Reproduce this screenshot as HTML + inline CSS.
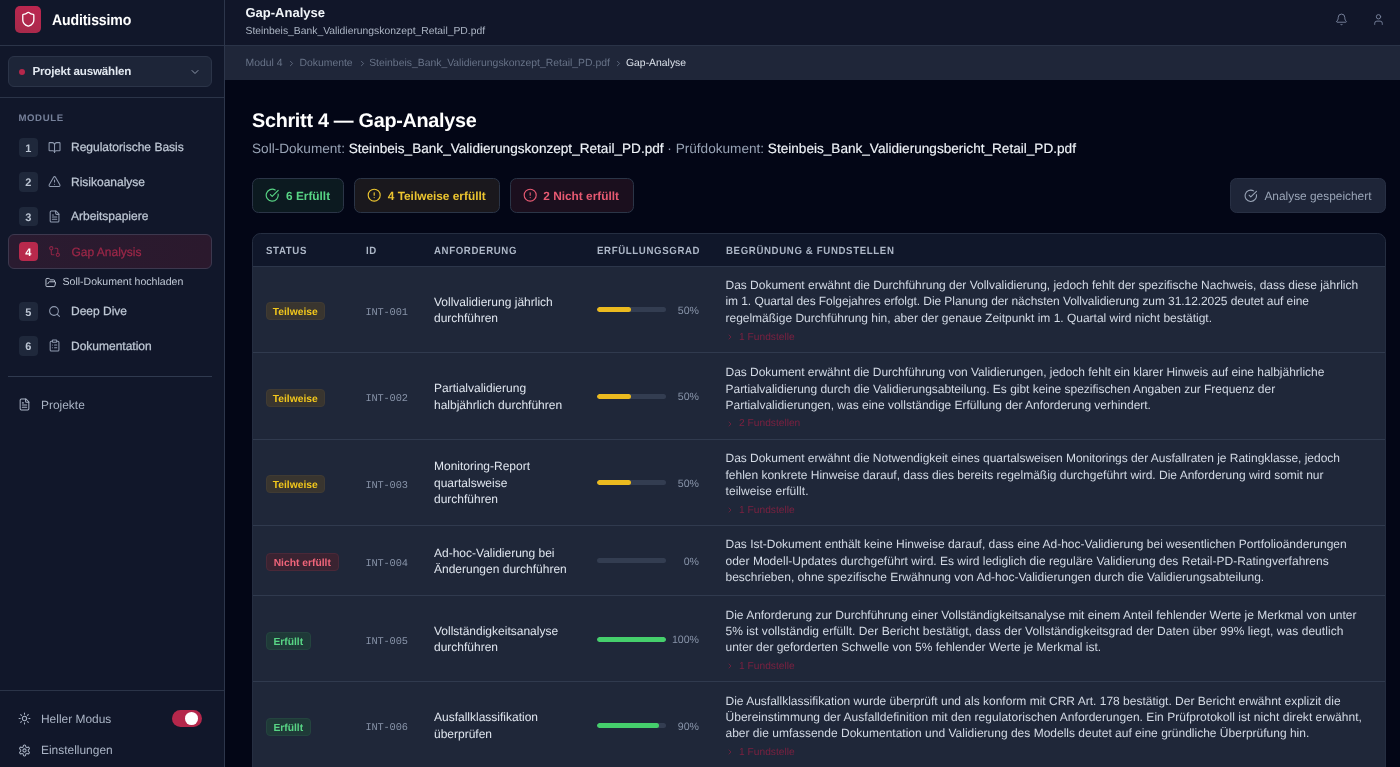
<!DOCTYPE html>
<html lang="de">
<head>
<meta charset="utf-8">
<title>Auditissimo – Gap-Analyse</title>
<style>
*{box-sizing:border-box;margin:0;padding:0}
html,body{width:1400px;height:767px;overflow:hidden;background:#030616;}
body{font-family:"Liberation Sans",sans-serif;color:#e2e8f0;position:relative;-webkit-font-smoothing:antialiased;text-rendering:geometricPrecision}
svg{display:block;fill:none;stroke:currentColor;stroke-width:2;stroke-linecap:round;stroke-linejoin:round}
#wrap{position:absolute;left:0;top:0;width:1400px;height:767px;overflow:hidden;will-change:transform}
.abs{position:absolute;white-space:nowrap}
/* ---------- sidebar ---------- */
#sidebar{position:absolute;left:0;top:0;width:225px;height:767px;background:#11172a;border-right:1px solid #2d364b}
#sb-head{position:absolute;left:0;top:0;width:224px;height:46px;border-bottom:1px solid #2b3448}
#logo{position:absolute;left:15px;top:6px;width:26px;height:27px;border-radius:5px;background:linear-gradient(200deg,#bd2650,#a62a4a);color:#fff}
#logo svg{position:absolute;left:4.7px;top:5.2px;width:16.6px;height:16.6px;stroke-width:1.9}
#brand{left:51.5px;top:11.9px;font-size:15.3px;font-weight:700;color:#fff;line-height:18px;letter-spacing:-0.13px;transform:scaleX(0.92);transform-origin:0 50%}
#proj{position:absolute;left:8px;top:56px;width:203.5px;height:31px;border-radius:6px;background:#1d2538;border:1px solid #2b3448}
#proj .dot{position:absolute;left:10.2px;top:11.5px;width:6px;height:6px;border-radius:50%;background:#b5274b}
#proj .t{left:23.5px;top:7px;font-size:11.6px;letter-spacing:-0.19px;font-weight:700;color:#e2e8f0;line-height:15px}
#proj svg{position:absolute;left:180px;top:9px;width:12px;height:12px;color:#8d98ab}
#sb-div1{position:absolute;left:0;top:97px;width:224px;height:1px;background:#2b3448}
#modlbl{left:18.4px;top:112.8px;font-size:9.6px;font-weight:700;letter-spacing:0.64px;color:#76819a;line-height:12px}
.nav{position:absolute;left:8px;width:203.5px;height:34.5px}
.nav .n{position:absolute;left:10.5px;top:7.5px;width:19.5px;height:19.5px;border-radius:4px;background:#1f283b;color:#bcc5d3;font-size:11px;font-weight:700;text-align:center;line-height:22.6px;overflow:hidden}
.nav svg{position:absolute;left:39.7px;top:10.6px;width:13.1px;height:13.1px;color:#909bb0;stroke-width:1.9}
.nav .l{left:63px;top:10.1px;font-size:12px;line-height:15px;color:#bec7d4;-webkit-text-stroke:0.25px currentColor}
.nav.act{background:linear-gradient(90deg,#2a1b30,#2b192d);border:1px solid #3d384e;border-radius:6px}
.nav.act .n{background:#b8294c;color:#fff;left:9.5px;top:6.5px}
.nav.act svg{color:#8f2446;left:38.5px;top:9.5px}
.nav.act .l{color:#9d2748;left:62.5px;top:9.6px}
#sub{position:absolute;left:44.5px;top:274px;height:16px}
#sub svg{position:absolute;left:0;top:2.5px;width:11.5px;height:11.5px;color:#c3ccd9;stroke-width:2}
#sub .l{left:18px;top:2.1px;font-size:10.55px;line-height:13px;color:#c0c9d6}
#sb-div2{position:absolute;left:8px;top:375.6px;width:204px;height:1px;background:#303a4f}
.misc svg{position:absolute;width:13px;height:13px;color:#a9b3c4;stroke-width:1.9}
.misc .l{font-size:11.95px;line-height:15px;color:#aab4c5}
#sb-foot{position:absolute;left:0;top:690px;width:224px;height:1px;background:#2b3448}
#toggle{position:absolute;left:172px;top:710px;width:30px;height:17px;border-radius:9px;background:#b5274b}
#toggle i{position:absolute;left:12.7px;top:2px;width:13.5px;height:13px;border-radius:50%;background:#fff}
/* ---------- topbar ---------- */
#topbar{position:absolute;left:225px;top:0;width:1175px;height:45px;background:#111629}
#tb-title{left:245.5px;top:4.6px;font-size:13px;font-weight:700;color:#f1f5f9;line-height:16px}
#tb-sub{left:245.5px;top:24.5px;font-size:10.35px;color:#acb5c4;line-height:13px}
.tbi{position:absolute;width:13px;height:13px;color:#76819a;stroke-width:1.8}
#crumbs{position:absolute;left:225px;top:45px;width:1175px;height:34.5px;background:#1f2639;border-top:1px solid #2a3347}
#crumbs span{position:absolute;top:11px;font-size:10.4px;line-height:13px;color:#677287;white-space:nowrap}
#crumbs span.cur{color:#dbe1ea}
#crumbs svg{position:absolute;top:13px;width:9px;height:9px;color:#667186;stroke-width:2.2}
/* ---------- content ---------- */
#h1{left:252px;top:109.3px;font-size:19.8px;font-weight:700;color:#fff;line-height:24px;letter-spacing:-0.28px}
#subline{left:252px;top:139.8px;font-size:13.6px;line-height:17px;color:#98a3b5}
#subline b{font-weight:400;color:#eef2f7;-webkit-text-stroke:0.15px currentColor}
.btn{position:absolute;top:178.3px;height:34.4px;border-radius:6.5px;border:1px solid #2b3547}
.btn svg{position:absolute;top:8.8px;width:14.4px;height:14.4px;stroke-width:1.9}
.btn .l{position:absolute;top:9.5px;font-size:11.85px;font-weight:700;line-height:14px;white-space:nowrap}
/* ---------- table ---------- */
#tbl{position:absolute;left:252px;top:232.5px;width:1133.5px;height:560px;border:1px solid #252e41;border-radius:8.5px 8.5px 0 0;background:#1f2739;overflow:hidden}
#thead{position:absolute;left:0;top:0;width:100%;height:33.6px;background:#10172a;border-bottom:1px solid #2c364a;z-index:2}
#thead span{position:absolute;top:11.9px;font-size:10.5px;font-weight:700;letter-spacing:0.68px;line-height:12px;color:#adb7c7;white-space:nowrap;transform:scaleX(0.92);transform-origin:0 50%}
.row{position:absolute;left:0;width:100%;border-bottom:1px solid #303a4e}
.bdg{position:absolute;left:13px;height:18px;border-radius:4px;font-size:10.3px;font-weight:700;line-height:17px;text-align:center;white-space:nowrap}
.bdg.y{background:#39352f;color:#f2c71c;border:1px solid #403b33}
.bdg.r{background:#3a2331;color:#f0657a;border:1px solid #4a2838}
.bdg.g{background:#1f3a38;color:#58d585;border:1px solid #24443f}
.id{position:absolute;left:112.5px;font-family:"Liberation Mono",monospace;font-size:10.3px;line-height:13px;color:#8793a8;letter-spacing:-0.15px}
.req{position:absolute;left:181px;font-size:12px;line-height:16.4px;color:#dfe5ee;white-space:nowrap}
.bar{position:absolute;left:343.5px;width:69.5px;height:5px;border-radius:3px;background:#333d51;overflow:hidden}
.bar i{display:block;height:5px;border-radius:3px}
.bar i.y{background:#ebba1f}
.bar i.g{background:#45cf6c}
.pct{position:absolute;left:400px;width:46px;text-align:right;font-size:10.6px;line-height:13px;color:#8793a8}
.txt{position:absolute;left:472.5px;font-size:12px;line-height:16.3px;color:#d2d9e4;white-space:nowrap}
.fs{position:absolute;left:472.5px;height:13px;color:#7a2140;font-size:10.2px;line-height:13px;white-space:nowrap;padding-left:13.6px}
.fs svg{position:absolute;left:0.5px;top:2.5px;width:8px;height:8px;stroke-width:2.4}
</style>
</head>
<body>
<div id="wrap">
<aside id="sidebar">
  <div id="sb-head">
    <div id="logo"><svg viewBox="0 0 24 24"><path d="M20 13c0 5-3.500 7.500-7.660 8.950a1 1 0 0 1-.670-.010C7.500 20.500 4 18 4 13V6a1 1 0 0 1 1-1c2 0 4.500-1.200 6.240-2.720a1.170 1.170 0 0 1 1.520 0C14.510 3.810 17 5 19 5a1 1 0 0 1 1 1z"/></svg></div>
    <div id="brand" class="abs">Auditissimo</div>
  </div>
  <div id="proj">
    <span class="dot"></span>
    <span class="t abs">Projekt auswählen</span>
    <svg viewBox="0 0 24 24"><path d="m6 9 6 6 6-6"/></svg>
  </div>
  <div id="sb-div1"></div>
  <div id="modlbl" class="abs">MODULE</div>

  <nav>
  <div class="nav" style="top:130px"><span class="n">1</span>
    <svg viewBox="0 0 24 24"><path d="M12 7v14"/><path d="M3 18a1 1 0 0 1-1-1V4a1 1 0 0 1 1-1h5a4 4 0 0 1 4 4 4 4 0 0 1 4-4h5a1 1 0 0 1 1 1v13a1 1 0 0 1-1 1h-6a3 3 0 0 0-3 3 3 3 0 0 0-3-3z"/></svg>
    <span class="l abs">Regulatorische Basis</span></div>
  <div class="nav" style="top:164.5px"><span class="n">2</span>
    <svg viewBox="0 0 24 24"><path d="m21.730 18-8-14a2 2 0 0 0-3.480 0l-8 14A2 2 0 0 0 4 21h16a2 2 0 0 0 1.730-3"/><path d="M12 9v4"/><path d="M12 17h.01"/></svg>
    <span class="l abs">Risikoanalyse</span></div>
  <div class="nav" style="top:199px"><span class="n">3</span>
    <svg viewBox="0 0 24 24"><path d="M15 2H6a2 2 0 0 0-2 2v16a2 2 0 0 0 2 2h12a2 2 0 0 0 2-2V7Z"/><path d="M14 2v4a2 2 0 0 0 2 2h4"/><path d="M10 9H8"/><path d="M16 13H8"/><path d="M16 17H8"/></svg>
    <span class="l abs">Arbeitspapiere</span></div>
  <div class="nav act" style="top:234px"><span class="n">4</span>
    <svg viewBox="0 0 24 24"><circle cx="18" cy="18" r="3"/><circle cx="6" cy="6" r="3"/><path d="M13 6h3a2 2 0 0 1 2 2v7"/><path d="M11 18H8a2 2 0 0 1-2-2V9"/></svg>
    <span class="l abs">Gap Analysis</span></div>
  <div id="sub">
    <svg viewBox="0 0 24 24"><path d="m6 14 1.500-2.900A2 2 0 0 1 9.240 10H20a2 2 0 0 1 1.940 2.500l-1.540 6a2 2 0 0 1-1.950 1.500H4a2 2 0 0 1-2-2V5a2 2 0 0 1 2-2h3.900a2 2 0 0 1 1.690.900l.810 1.200a2 2 0 0 0 1.670.900H18a2 2 0 0 1 2 2v2"/></svg>
    <span class="l abs">Soll-Dokument hochladen</span></div>
  <div class="nav" style="top:294px"><span class="n">5</span>
    <svg viewBox="0 0 24 24"><circle cx="11" cy="11" r="8"/><path d="m21 21-4.300-4.300"/></svg>
    <span class="l abs">Deep Dive</span></div>
  <div class="nav" style="top:328.5px"><span class="n">6</span>
    <svg viewBox="0 0 24 24"><rect x="8" y="2" width="8" height="4" rx="1"/><path d="M16 4h2a2 2 0 0 1 2 2v14a2 2 0 0 1-2 2H6a2 2 0 0 1-2-2V6a2 2 0 0 1 2-2h2"/><path d="M12 11h4"/><path d="M12 16h4"/><path d="M8 11h.01"/><path d="M8 16h.01"/></svg>
    <span class="l abs">Dokumentation</span></div>
  </nav>
  <div id="sb-div2"></div>

  <div class="misc">
    <svg viewBox="0 0 24 24" style="left:18px;top:398px"><path d="M15 2H6a2 2 0 0 0-2 2v16a2 2 0 0 0 2 2h12a2 2 0 0 0 2-2V7Z"/><path d="M14 2v4a2 2 0 0 0 2 2h4"/><path d="M10 9H8"/><path d="M16 13H8"/><path d="M16 17H8"/></svg>
    <span class="l abs" style="left:41px;top:397.8px">Projekte</span>
  </div>
  <div id="sb-foot"></div>
  <div class="misc">
    <svg viewBox="0 0 24 24" style="left:18px;top:712px"><circle cx="12" cy="12" r="4"/><path d="M12 2v2"/><path d="M12 20v2"/><path d="m4.930 4.930 1.410 1.410"/><path d="m17.660 17.660 1.410 1.410"/><path d="M2 12h2"/><path d="M20 12h2"/><path d="m6.340 17.660-1.410 1.410"/><path d="m19.070 4.930-1.410 1.410"/></svg>
    <span class="l abs" style="left:41px;top:711.7px">Heller Modus</span>
    <div id="toggle"><i></i></div>
    <svg viewBox="0 0 24 24" style="left:18px;top:743.5px"><path d="M12.220 2h-.440a2 2 0 0 0-2 2v.180a2 2 0 0 1-1 1.730l-.430.250a2 2 0 0 1-2 0l-.150-.080a2 2 0 0 0-2.730.730l-.220.380a2 2 0 0 0 .730 2.730l.150.100a2 2 0 0 1 1 1.720v.510a2 2 0 0 1-1 1.740l-.150.090a2 2 0 0 0-.730 2.730l.220.380a2 2 0 0 0 2.730.730l.150-.080a2 2 0 0 1 2 0l.430.250a2 2 0 0 1 1 1.730V20a2 2 0 0 0 2 2h.440a2 2 0 0 0 2-2v-.180a2 2 0 0 1 1-1.730l.430-.250a2 2 0 0 1 2 0l.150.080a2 2 0 0 0 2.730-.730l.220-.390a2 2 0 0 0-.730-2.730l-.150-.080a2 2 0 0 1-1-1.740v-.500a2 2 0 0 1 1-1.740l.150-.090a2 2 0 0 0 .730-2.730l-.220-.380a2 2 0 0 0-2.730-.730l-.150.080a2 2 0 0 1-2 0l-.430-.250a2 2 0 0 1-1-1.730V4a2 2 0 0 0-2-2z"/><circle cx="12" cy="12" r="3"/></svg>
    <span class="l abs" style="left:41px;top:742.5px">Einstellungen</span>
  </div>
</aside>
<header id="topbar"></header>
<div id="tb-title" class="abs">Gap-Analyse</div>
<div id="tb-sub" class="abs">Steinbeis_Bank_Validierungskonzept_Retail_PD.pdf</div>
<svg class="tbi" viewBox="0 0 24 24" style="left:1335px;top:12.5px"><path d="M10.268 21a2 2 0 0 0 3.464 0"/><path d="M3.262 15.326A1 1 0 0 0 4 17h16a1 1 0 0 0 .740-1.673C19.410 13.956 18 12.499 18 8A6 6 0 0 0 6 8c0 4.499-1.411 5.956-2.738 7.326"/></svg>
<svg class="tbi" viewBox="0 0 24 24" style="left:1371.5px;top:13px"><path d="M19 21v-2a4 4 0 0 0-4-4H9a4 4 0 0 0-4 4v2"/><circle cx="12" cy="7" r="4"/></svg>
<div id="crumbs">
  <span id="c1" style="left:20.5px">Modul 4</span><svg viewBox="0 0 24 24" style="left:62px"><path d="m9 18 6-6-6-6"/></svg>
  <span id="c2" style="left:74.5px">Dokumente</span><svg viewBox="0 0 24 24" style="left:132.5px"><path d="m9 18 6-6-6-6"/></svg>
  <span id="c3" style="left:144.2px">Steinbeis_Bank_Validierungskonzept_Retail_PD.pdf</span><svg viewBox="0 0 24 24" style="left:389px"><path d="m9 18 6-6-6-6"/></svg>
  <span id="c4" class="cur" style="left:401px">Gap-Analyse</span>
</div>
<main id="main">
<h1 id="h1" class="abs">Schritt 4 — Gap-Analyse</h1>
<p id="subline" class="abs"><span id="s1">Soll-Dokument: </span><b id="s2">Steinbeis_Bank_Validierungskonzept_Retail_PD.pdf</b><span id="s3"> · Prüfdokument: </span><b id="s4">Steinbeis_Bank_Validierungsbericht_Retail_PD.pdf</b></p>

<div class="btn" style="left:252px;width:92px;background:#0c1a20;color:#58d585">
  <svg viewBox="0 0 24 24" style="left:11.9px"><path d="M21.801 10A10 10 0 1 1 17 3.335"/><path d="m9 11 3 3L22 4"/></svg>
  <span class="l" id="b1" style="left:33px">6 Erfüllt</span></div>
<div class="btn" style="left:354px;width:145.5px;background:#1a181d;color:#ecc530">
  <svg viewBox="0 0 24 24" style="left:11.7px"><circle cx="12" cy="12" r="10"/><path d="M12 8v4"/><path d="M12 16h.01"/></svg>
  <span class="l" id="b2" style="left:32.8px">4 Teilweise erfüllt</span></div>
<div class="btn" style="left:509.5px;width:124px;background:#1b0f1e;color:#e75a72">
  <svg viewBox="0 0 24 24" style="left:12.5px"><circle cx="12" cy="12" r="10"/><path d="M12 8v4"/><path d="M12 16h.01"/></svg>
  <span class="l" id="b3" style="left:32.8px">2 Nicht erfüllt</span></div>
<div class="btn" style="left:1230px;width:155.5px;background:#1e2538;border-color:#283044;color:#9aa5b7">
  <svg viewBox="0 0 24 24" style="left:13px;width:13.6px;height:13.6px;top:9.3px"><path d="M21.801 10A10 10 0 1 1 17 3.335"/><path d="m9 11 3 3L22 4"/></svg>
  <span class="l" id="b4" style="left:33.4px;font-weight:400;font-size:11.9px">Analyse gespeichert</span></div>

<section id="tbl">
<div id="thead"><span style="left:13px">STATUS</span><span style="left:112.5px">ID</span><span style="left:181px">ANFORDERUNG</span><span style="left:343.5px">ERFÜLLUNGSGRAD</span><span style="left:472.5px">BEGRÜNDUNG &amp; FUNDSTELLEN</span></div>
<div class="row" id="r1" style="top:32.80px;height:86.95px">
<span class="bdg y" id="r1bdg" style="top:35.82px;width:58.5px"><span id="r1bt" style="position:relative;top:1.23px">Teilweise</span></span>
<span class="id" id="r1id" style="top:40.71px">INT-001</span>
<div class="req" id="r1req" style="top:27.27px">Vollvalidierung jährlich<br>durchführen</div>
<span class="bar" style="top:40.87px"><i class="y" style="width:50%"></i></span>
<span class="pct" id="r1pct" style="top:38.95px">50%</span>
<div class="txt" id="r1txt" style="top:10.81px"><span id="r1l1" style="letter-spacing:-0.015px">Das Dokument erwähnt die Durchführung der Vollvalidierung, jedoch fehlt der spezifische Nachweis, dass diese jährlich</span><br><span id="r1l2" style="letter-spacing:-0.075px">im 1. Quartal des Folgejahres erfolgt. Die Planung der nächsten Vollvalidierung zum 31.12.2025 deutet auf eine</span><br><span id="r1l3" style="letter-spacing:-0.012px">regelmäßige Durchführung hin, aber der genaue Zeitpunkt im 1. Quartal wird nicht bestätigt.</span></div>
<div class="fs" id="r1fs" style="top:64.31px"><svg viewBox="0 0 24 24"><path d="m9 18 6-6-6-6"/></svg>1 Fundstelle</div>
</div>
<div class="row" id="r2" style="top:119.75px;height:86.35px">
<span class="bdg y" id="r2bdg" style="top:35.53px;width:58.5px"><span id="r2bt" style="position:relative;top:0.88px">Teilweise</span></span>
<span class="id" id="r2id" style="top:39.72px">INT-002</span>
<div class="req" id="r2req" style="top:26.98px">Partialvalidierung<br>halbjährlich durchführen</div>
<span class="bar" style="top:40.58px"><i class="y" style="width:50%"></i></span>
<span class="pct" id="r2pct" style="top:37.84px">50%</span>
<div class="txt" id="r2txt" style="top:11.01px"><span id="r2l1" style="letter-spacing:-0.030px">Das Dokument erwähnt die Durchführung von Validierungen, jedoch fehlt ein klarer Hinweis auf eine halbjährliche</span><br><span id="r2l2" style="letter-spacing:-0.024px">Partialvalidierung durch die Validierungsabteilung. Es gibt keine spezifischen Angaben zur Frequenz der</span><br><span id="r2l3" style="letter-spacing:-0.010px">Partialvalidierungen, was eine vollständige Erfüllung der Anforderung verhindert.</span></div>
<div class="fs" id="r2fs" style="top:63.91px"><svg viewBox="0 0 24 24"><path d="m9 18 6-6-6-6"/></svg>2 Fundstellen</div>
</div>
<div class="row" id="r3" style="top:206.10px;height:86.35px">
<span class="bdg y" id="r3bdg" style="top:35.53px;width:58.5px"><span id="r3bt" style="position:relative;top:1.23px">Teilweise</span></span>
<span class="id" id="r3id" style="top:40.44px">INT-003</span>
<div class="req" id="r3req" style="top:18.83px">Monitoring-Report<br>quartalsweise<br>durchführen</div>
<span class="bar" style="top:40.58px"><i class="y" style="width:50%"></i></span>
<span class="pct" id="r3pct" style="top:38.66px">50%</span>
<div class="txt" id="r3txt" style="top:10.81px"><span id="r3l1" style="letter-spacing:-0.029px">Das Dokument erwähnt die Notwendigkeit eines quartalsweisen Monitorings der Ausfallraten je Ratingklasse, jedoch</span><br><span id="r3l2" style="letter-spacing:-0.009px">fehlen konkrete Hinweise darauf, dass dies bereits regelmäßig durchgeführt wird. Die Anforderung wird somit nur</span><br><span id="r3l3" style="letter-spacing:0.059px">teilweise erfüllt.</span></div>
<div class="fs" id="r3fs" style="top:64.11px"><svg viewBox="0 0 24 24"><path d="m9 18 6-6-6-6"/></svg>1 Fundstelle</div>
</div>
<div class="row" id="r4" style="top:292.45px;height:70.15px">
<span class="bdg r" id="r4bdg" style="top:27.42px;width:72.5px"><span id="r4bt" style="position:relative;top:0.96px">Nicht erfüllt</span></span>
<span class="id" id="r4id" style="top:31.90px">INT-004</span>
<div class="req" id="r4req" style="top:18.87px">Ad-hoc-Validierung bei<br>Änderungen durchführen</div>
<span class="bar" style="top:32.47px"><i class="y" style="width:0%"></i></span>
<span class="pct" id="r4pct" style="top:29.80px">0%</span>
<div class="txt" id="r4txt" style="top:10.42px"><span id="r4l1" style="letter-spacing:-0.009px">Das Ist-Dokument enthält keine Hinweise darauf, dass eine Ad-hoc-Validierung bei wesentlichen Portfolioänderungen</span><br><span id="r4l2" style="letter-spacing:0.010px">oder Modell-Updates durchgeführt wird. Es wird lediglich die reguläre Validierung des Retail-PD-Ratingverfahrens</span><br><span id="r4l3" style="letter-spacing:0.001px">beschrieben, ohne spezifische Erwähnung von Ad-hoc-Validierungen durch die Validierungsabteilung.</span></div>
</div>
<div class="row" id="r5" style="top:362.60px;height:86.30px">
<span class="bdg g" id="r5bdg" style="top:35.50px;width:44.5px"><span id="r5bt" style="position:relative;top:1.40px">Erfüllt</span></span>
<span class="id" id="r5id" style="top:40.20px">INT-005</span>
<div class="req" id="r5req" style="top:26.95px">Vollständigkeitsanalyse<br>durchführen</div>
<span class="bar" style="top:40.55px"><i class="g" style="width:100%"></i></span>
<span class="pct" id="r5pct" style="top:38.10px">100%</span>
<div class="txt" id="r5txt" style="top:10.41px"><span id="r5l1" style="letter-spacing:-0.010px">Die Anforderung zur Durchführung einer Vollständigkeitsanalyse mit einem Anteil fehlender Werte je Merkmal von unter</span><br><span id="r5l2" style="letter-spacing:0.047px">5% ist vollständig erfüllt. Der Bericht bestätigt, dass der Vollständigkeitsgrad der Daten über 99% liegt, was deutlich</span><br><span id="r5l3" style="letter-spacing:-0.016px">unter der geforderten Schwelle von 5% fehlender Werte je Merkmal ist.</span></div>
<div class="fs" id="r5fs" style="top:63.51px"><svg viewBox="0 0 24 24"><path d="m9 18 6-6-6-6"/></svg>1 Fundstelle</div>
</div>
<div class="row" id="r6" style="top:448.90px;height:86.30px">
<span class="bdg g" id="r6bdg" style="top:35.50px;width:44.5px"><span id="r6bt" style="position:relative;top:1.00px">Erfüllt</span></span>
<span class="id" id="r6id" style="top:39.95px">INT-006</span>
<div class="req" id="r6req" style="top:26.95px">Ausfallklassifikation<br>überprüfen</div>
<span class="bar" style="top:40.55px"><i class="g" style="width:90%"></i></span>
<span class="pct" id="r6pct" style="top:38.40px">90%</span>
<div class="txt" id="r6txt" style="top:10.51px"><span id="r6l1" style="letter-spacing:0.001px">Die Ausfallklassifikation wurde überprüft und als konform mit CRR Art. 178 bestätigt. Der Bericht erwähnt explizit die</span><br><span id="r6l2" style="letter-spacing:0.034px">Übereinstimmung der Ausfalldefinition mit den regulatorischen Anforderungen. Ein Prüfprotokoll ist nicht direkt erwähnt,</span><br><span id="r6l3" style="letter-spacing:0.003px">aber die umfassende Dokumentation und Validierung des Modells deutet auf eine gründliche Überprüfung hin.</span></div>
<div class="fs" id="r6fs" style="top:63.51px"><svg viewBox="0 0 24 24"><path d="m9 18 6-6-6-6"/></svg>1 Fundstelle</div>
</div>
</section>
</main>
</div>
</body>
</html>
